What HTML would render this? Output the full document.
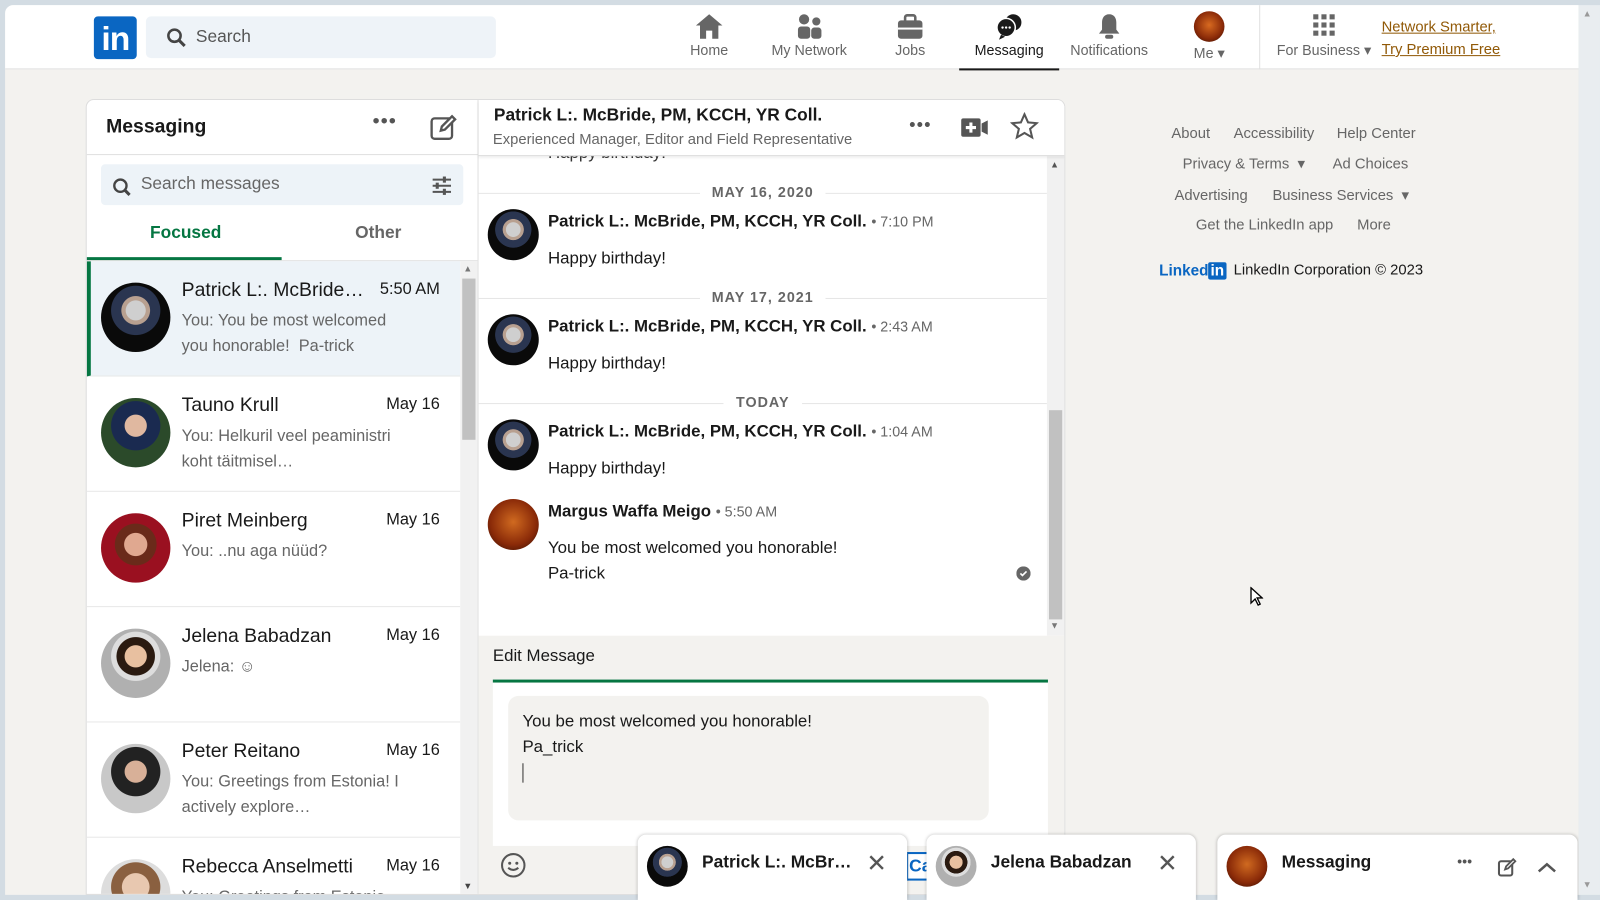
<!DOCTYPE html>
<html><head><meta charset="utf-8"><style>
*{box-sizing:border-box;margin:0;padding:0}
html,body{width:1600px;height:900px;overflow:hidden;background:#d3dce3;font-family:"Liberation Sans",sans-serif;color:#191919}
#w{position:absolute;left:0;top:0;width:1568px;height:882px;overflow:hidden;transform:scale(1.0204);transform-origin:0 0}
.a{position:absolute}
.page{left:5px;top:5px;width:1542px;height:872px;background:#f3f2ef;border-radius:8px 0 0 0;overflow:hidden}
.nav{left:0;top:0;width:1542px;height:63px;background:#fff;border-bottom:1px solid #e0e0e0}
.ni{position:absolute;top:8px;text-align:center;font-size:14px;color:#666}
.ni svg{display:block;margin:0 auto 2px}
.card{left:84px;top:97px;width:960px;height:780px;background:#fff;border:1px solid #ddd;border-radius:8px 8px 0 0;overflow:hidden}
.av{position:absolute;border-radius:50%;background:radial-gradient(circle at 50% 40%,#cfcfcf 0 18%,#b8a090 19% 26%,#2a3550 27% 45%,#0a0a0a 46%)}
.it{position:absolute;left:0;width:366px;height:113px;border-bottom:1px solid #e8e8e8}
.it .nm{position:absolute;left:93px;top:18px;font-size:19px;color:#191919}
.it .dt{position:absolute;right:20px;top:19px;font-size:16px}
.it .pv{position:absolute;left:93px;top:46px;font-size:16px;color:#666;line-height:25px;width:235px}
.dl{position:absolute;left:0;width:557px;height:1px;background:#e6e6e6}
.dlt{position:absolute;left:0;width:557px;text-align:center;font-size:14px;font-weight:bold;color:#666;letter-spacing:1px}
.dlt span{background:#fff;padding:0 12px}
.mn{position:absolute;left:68px;font-size:16.5px;font-weight:bold}
.mn small{font-weight:normal;font-size:14px;color:#666}
.mt{position:absolute;left:68px;font-size:16.5px;line-height:25px}
.chip{position:absolute;top:818px;height:64px;background:#fff;border-radius:8px 8px 0 0;box-shadow:0 0 3px rgba(0,0,0,.25)}
.chip b{position:absolute;left:63px;top:17px;font-size:17px}
.x{position:absolute;top:14px;font-size:24px;color:#555}
.fl{position:absolute;font-size:14.5px;color:#666}
</style></head><body><div id="w">
<div class="a page">
 <div class="a nav">
  <div class="a" style="left:87px;top:11px;width:42px;height:42px;background:#0a66c2;border-radius:4px;color:#fff;font-weight:bold;font-size:33px;line-height:44px;text-align:center;letter-spacing:-1px">in</div>
  <div class="a" style="left:138px;top:11px;width:343px;height:41px;background:#eef3f8;border-radius:5px"></div>
  <svg class="a" style="left:158px;top:22px" width="20" height="20"><circle cx="8" cy="8" r="6" fill="none" stroke="#444" stroke-width="2.5"/><path d="M12 12l6 6" stroke="#444" stroke-width="3"/></svg>
  <div class="a" style="left:187px;top:21px;font-size:17px;color:#555">Search</div>
  <div class="ni" style="left:665px;width:50px"><svg width="28" height="26"><path d="M14 1L1 12h4v13h6v-8h6v8h6V12h4z" fill="#666"/></svg>Home</div>
  <div class="ni" style="left:743px;width:90px"><svg width="28" height="26"><circle cx="9" cy="6" r="5" fill="#666"/><circle cx="21" cy="8" r="4" fill="#666"/><rect x="3" y="13" width="12" height="12" rx="3" fill="#666"/><rect x="16" y="14" width="10" height="11" rx="3" fill="#666"/></svg>My Network</div>
  <div class="ni" style="left:862px;width:50px"><svg width="28" height="26"><rect x="2" y="7" width="24" height="18" rx="3" fill="#666"/><rect x="9" y="2" width="10" height="7" rx="2" fill="none" stroke="#666" stroke-width="2.5"/><rect x="2" y="14" width="24" height="2" fill="#fff"/></svg>Jobs</div>
  <div class="ni" style="left:935px;width:98px;height:56px;color:#191919;border-bottom:2px solid #191919"><svg width="28" height="26"><circle cx="18" cy="9" r="8" fill="#191919"/><circle cx="11" cy="14" r="9" fill="#191919" stroke="#fff" stroke-width="1.5"/><path d="M6 21l-2 5 6-3z" fill="#191919"/><circle cx="7.5" cy="14" r="1.2" fill="#fff"/><circle cx="11" cy="14" r="1.2" fill="#fff"/><circle cx="14.5" cy="14" r="1.2" fill="#fff"/></svg>Messaging</div>
  <div class="ni" style="left:1037px;width:90px"><svg width="28" height="26"><path d="M14 1c-5 0-7 4-7 8v7l-3 4h20l-3-4V9c0-4-2-8-7-8z" fill="#666"/><rect x="10" y="21" width="8" height="4" rx="2" fill="#666"/></svg>Notifications</div>
  <div class="ni" style="left:1155px;width:50px"><div style="width:30px;height:30px;margin:-2px auto 3px;border-radius:50%;background:radial-gradient(circle at 50% 45%,#d86a20,#8a2a08 60%,#2a0a02)"></div>Me ▾</div>
  <div class="a" style="left:1229px;top:0;width:1px;height:63px;background:#e0e0e0"></div>
  <div class="ni" style="left:1240px;width:105px"><svg width="28" height="26"><g fill="#666"><rect x="3" y="1" width="5" height="5"/><rect x="11" y="1" width="5" height="5"/><rect x="19" y="1" width="5" height="5"/><rect x="3" y="9" width="5" height="5"/><rect x="11" y="9" width="5" height="5"/><rect x="19" y="9" width="5" height="5"/><rect x="3" y="17" width="5" height="5"/><rect x="11" y="17" width="5" height="5"/><rect x="19" y="17" width="5" height="5"/></g></svg>For Business ▾</div>
  <div class="a" style="left:1349px;top:11px;font-size:14.5px;color:#915907;text-decoration:underline;line-height:22px">Network Smarter,<br>Try Premium Free</div>
 </div>
</div>
<div class="a card">
 <div class="a" style="left:0;top:0;width:384px;height:54px;border-bottom:1px solid #e0e0e0"></div>
 <div class="a" style="left:19px;top:16px;font-size:19px;font-weight:bold">Messaging</div>
 <div class="a" style="left:280px;top:10px;font-size:20px;color:#555;letter-spacing:1px">•••</div>
 <svg class="a" style="left:336px;top:13px" width="28" height="28"><rect x="2" y="5" width="20" height="20" rx="3" fill="none" stroke="#555" stroke-width="2.3"/><path d="M11 17l1-4 10-10 3 3-10 10z" fill="#fff" stroke="#555" stroke-width="2.3"/></svg>
 <div class="a" style="left:383px;top:0;width:1px;height:800px;background:#e0e0e0"></div>
 <div class="a" style="left:14px;top:63px;width:355px;height:40px;background:#edf3f8;border-radius:4px"></div>
 <svg class="a" style="left:24px;top:75px" width="22" height="22"><circle cx="9" cy="9" r="6" fill="none" stroke="#444" stroke-width="2.3"/><path d="M13 13l5 5" stroke="#444" stroke-width="3"/></svg>
 <div class="a" style="left:53px;top:72px;font-size:17px;color:#666">Search messages</div>
 <svg class="a" style="left:338px;top:74px" width="20" height="20"><g stroke="#555" stroke-width="2"><path d="M1 4h18M1 10h18M1 16h18"/></g><g fill="#555"><rect x="11" y="1" width="3" height="6"/><rect x="4" y="7" width="3" height="6"/><rect x="11" y="13" width="3" height="6"/></g></svg>
 <div class="a" style="left:62px;top:120px;font-size:17px;font-weight:bold;color:#057642">Focused</div>
 <div class="a" style="left:263px;top:120px;font-size:17px;font-weight:bold;color:#666">Other</div>
 <div class="a" style="left:0;top:154px;width:191px;height:3px;background:#057642"></div>
 <div class="a" style="left:0;top:157px;width:383px;height:1px;background:#e0e0e0"></div>
 <div style="position:absolute;left:0;top:158px;width:366px;height:642px;overflow:hidden">
  <div class="it" style="top:0;background:#edf3f8;border-left:4px solid #057642"><div class="av" style="left:10px;top:21px;width:68px;height:68px"></div><div class="nm" style="left:89px">Patrick L:. McBride…</div><div class="dt">5:50 AM</div><div class="pv" style="left:89px;width:215px">You: You be most welcomed you honorable!&nbsp; Pa-trick</div></div>
  <div class="it" style="top:113px"><div class="av" style="left:14px;top:21px;width:68px;height:68px;background:radial-gradient(circle at 50% 40%,#e0b8a0 0 20%,#1a2a50 21% 45%,#2b4a2a 46%)"></div><div class="nm">Tauno Krull</div><div class="dt">May 16</div><div class="pv">You: Helkuril veel peaminis­tri koht täitmisel…</div></div>
  <div class="it" style="top:226px"><div class="av" style="left:14px;top:21px;width:68px;height:68px;background:radial-gradient(circle at 50% 45%,#e0a890 0 22%,#6a2a1a 23% 40%,#9a1020 41%)"></div><div class="nm">Piret Meinberg</div><div class="dt">May 16</div><div class="pv">You: ..nu aga nüüd?</div></div>
  <div class="it" style="top:339px"><div class="av" style="left:14px;top:21px;width:68px;height:68px;background:radial-gradient(circle at 50% 40%,#e8c0a0 0 20%,#2a1a10 21% 35%,#ddd 36% 45%,#b0b0b0 46%)"></div><div class="nm">Jelena Babadzan</div><div class="dt">May 16</div><div class="pv">Jelena: ☺</div></div>
  <div class="it" style="top:452px"><div class="av" style="left:14px;top:21px;width:68px;height:68px;background:radial-gradient(circle at 50% 40%,#d8b098 0 20%,#222 21% 45%,#c8c8c8 46%)"></div><div class="nm">Peter Reitano</div><div class="dt">May 16</div><div class="pv">You: Greetings from Estonia! I actively explore…</div></div>
  <div class="it" style="top:565px"><div class="av" style="left:14px;top:21px;width:68px;height:68px;background:radial-gradient(circle at 50% 40%,#e8c8b0 0 25%,#8a6040 26% 45%,#ddd 46%)"></div><div class="nm">Rebecca Anselmetti</div><div class="dt">May 16</div><div class="pv">You: Greetings from Estonia</div></div>
 </div>
 <div class="a" style="left:366px;top:158px;width:17px;height:622px;background:#f1f1f1"></div>
 <div class="a" style="left:368px;top:175px;width:13px;height:158px;background:#c1c1c1"></div>
 <div class="a" style="left:369px;top:160px;font-size:9px;color:#777">▲</div>
 <div class="a" style="left:369px;top:765px;font-size:9px;color:#444">▼</div>
 <div class="a" style="left:384px;top:0;width:575px;height:55px;border-bottom:1px solid #ddd;box-shadow:0 2px 3px rgba(0,0,0,.08);background:#fff;z-index:2"></div>
 <div class="a" style="left:399px;top:5px;font-size:17px;font-weight:bold;z-index:3">Patrick L:. McBride, PM, KCCH, YR Coll.</div>
 <div class="a" style="left:398px;top:31px;font-size:14.5px;color:#666;z-index:3">Experienced Manager, Editor and Field Representative</div>
 <div class="a" style="left:806px;top:14px;font-size:18px;color:#555;z-index:3;letter-spacing:1px">•••</div>
 <svg class="a" style="left:856px;top:17px;z-index:3" width="28" height="20"><rect x="1" y="1" width="19" height="18" rx="2" fill="#555"/><path d="M21 6l6-3v14l-6-3z" fill="#555"/><path d="M10.5 5v10M5.5 10h10" stroke="#fff" stroke-width="3"/></svg>
 <svg class="a" style="left:905px;top:12px;z-index:3" width="28" height="28"><path d="M14 2l3.5 8 8.5.7-6.5 5.6 2 8.4L14 20.3 6.5 24.7l2-8.4L2 10.7l8.5-.7z" fill="none" stroke="#555" stroke-width="2"/></svg>
 <div style="position:absolute;left:384px;top:55px;width:557px;height:470px;overflow:hidden">
  <div class="mt" style="top:-15px;color:#333">Happy birthday!</div>
  <div class="dl" style="top:36px"></div><div class="dlt" style="top:27px"><span>MAY 16, 2020</span></div>
  <div class="av" style="left:9px;top:52px;width:50px;height:50px"></div>
  <div class="mn" style="top:55px">Patrick L:. McBride, PM, KCCH, YR Coll. <small>• 7:10 PM</small></div>
  <div class="mt" style="top:88px">Happy birthday!</div>
  <div class="dl" style="top:139px"></div><div class="dlt" style="top:130px"><span>MAY 17, 2021</span></div>
  <div class="av" style="left:9px;top:155px;width:50px;height:50px"></div>
  <div class="mn" style="top:158px">Patrick L:. McBride, PM, KCCH, YR Coll. <small>• 2:43 AM</small></div>
  <div class="mt" style="top:191px">Happy birthday!</div>
  <div class="dl" style="top:242px"></div><div class="dlt" style="top:233px"><span>TODAY</span></div>
  <div class="av" style="left:9px;top:258px;width:50px;height:50px"></div>
  <div class="mn" style="top:261px">Patrick L:. McBride, PM, KCCH, YR Coll. <small>• 1:04 AM</small></div>
  <div class="mt" style="top:294px">Happy birthday!</div>
  <div class="av" style="left:9px;top:336px;width:50px;height:50px;background:radial-gradient(circle at 50% 45%,#d06a20,#8a2a08 60%,#2a0a02)"></div>
  <div class="mn" style="top:339px">Margus Waffa Meigo <small>• 5:50 AM</small></div>
  <div class="mt" style="top:372px">You be most welcomed you honorable!<br>Pa-trick</div>
  <svg class="a" style="left:527px;top:402px" width="14" height="14"><circle cx="7" cy="7" r="7" fill="#666"/><path d="M4 7l2 2 4-4" stroke="#fff" stroke-width="1.6" fill="none"/></svg>
 </div>
 <div class="a" style="left:941px;top:55px;width:17px;height:470px;background:#f1f1f1"></div>
 <div class="a" style="left:943px;top:304px;width:13px;height:205px;background:#c1c1c1"></div>
 <div class="a" style="left:944px;top:58px;font-size:9px;color:#555">▲</div>
 <div class="a" style="left:944px;top:510px;font-size:9px;color:#777">▼</div>
 <div class="a" style="left:384px;top:525px;width:575px;height:275px;background:#f3f2ef"></div>
 <div class="a" style="left:398px;top:536px;font-size:16.5px;color:#191919">Edit Message</div>
 <div class="a" style="left:398px;top:568px;width:544px;height:3px;background:#057642"></div>
 <div class="a" style="left:398px;top:571px;width:544px;height:160px;background:#fff"></div>
 <div class="a" style="left:413px;top:584px;width:471px;height:122px;background:#f3f2ef;border-radius:10px"></div>
 <div class="a" style="left:427px;top:597px;font-size:16.5px;line-height:25px">You be most welcomed you honorable!<br>Pa_trick<br><span style="display:inline-block;width:1px;height:19px;background:#333;vertical-align:middle"></span></div>
 <svg class="a" style="left:405px;top:737px" width="26" height="26"><circle cx="13" cy="13" r="11" fill="none" stroke="#555" stroke-width="2"/><circle cx="9.5" cy="11" r="1.5" fill="#555"/><circle cx="16.5" cy="11" r="1.5" fill="#555"/><path d="M8 15.5q5 4 10 0" stroke="#555" stroke-width="2" fill="none"/></svg>
</div>
<div class="fl" style="left:1148px;top:123px">About</div>
<div class="fl" style="left:1209px;top:123px">Accessibility</div>
<div class="fl" style="left:1310px;top:123px">Help Center</div>
<div class="fl" style="left:1159px;top:153px">Privacy &amp; Terms &nbsp;▾</div>
<div class="fl" style="left:1306px;top:153px">Ad Choices</div>
<div class="fl" style="left:1151px;top:184px">Advertising</div>
<div class="fl" style="left:1247px;top:184px">Business Services &nbsp;▾</div>
<div class="fl" style="left:1172px;top:213px">Get the LinkedIn app</div>
<div class="fl" style="left:1330px;top:213px">More</div>
<div class="a" style="left:1136px;top:257px;font-size:15px;font-weight:bold;color:#0a66c2">Linked<span style="background:#0a66c2;color:#fff;padding:0 2px;border-radius:2px">in</span></div>
<div class="a" style="left:1209px;top:257px;font-size:14.5px;color:#191919">LinkedIn Corporation © 2023</div>
<svg class="a" style="left:1224px;top:575px" width="14" height="20"><path d="M2 1v15l4-4 3 6 2-1-3-6h5z" fill="#fff" stroke="#000" stroke-width="1.3"/></svg>
<div class="a" style="left:888px;top:835px;width:22px;height:28px;border:2px solid #0a66c2;border-right:none;color:#0a66c2;font-weight:bold;font-size:17px;padding:2px 0 0 1px;background:#fff;overflow:hidden">Ca</div>
<div class="chip" style="left:625px;width:264px"><div class="av" style="left:9px;top:11px;width:40px;height:40px"></div><b>Patrick L:. McBr…</b><span class="x" style="left:224px">✕</span></div>
<div class="chip" style="left:908px;width:264px"><div class="av" style="left:9px;top:11px;width:40px;height:40px;background:radial-gradient(circle at 50% 40%,#e8c0a0 0 20%,#2a1a10 21% 35%,#ddd 36% 45%,#b0b0b0 46%)"></div><b>Jelena Babadzan</b><span class="x" style="left:226px">✕</span></div>
<div class="chip" style="left:1193px;width:353px"><div class="av" style="left:9px;top:11px;width:40px;height:40px;background:radial-gradient(circle at 50% 45%,#d06a20,#8a2a08 60%,#2a0a02)"></div><b>Messaging</b><span class="a" style="left:235px;top:18px;color:#555;font-size:14px">•••</span><svg class="a" style="left:274px;top:22px" width="20" height="20"><rect x="2" y="4" width="13" height="14" rx="2" fill="none" stroke="#555" stroke-width="2"/><path d="M8 12l1-3 7-7 2 2-7 7z" fill="#fff" stroke="#555" stroke-width="1.8"/></svg><svg class="a" style="left:313px;top:26px" width="20" height="12"><path d="M2 10l8-7 8 7" stroke="#555" stroke-width="2.5" fill="none"/></svg></div>
<div class="a" style="left:1547px;top:5px;width:21px;height:872px;background:#e9edf0"></div>
<div class="a" style="left:1551px;top:8px;font-size:9px;color:#999">▲</div>
<div class="a" style="left:1551px;top:862px;font-size:9px;color:#999">▼</div>
</div></body></html>
